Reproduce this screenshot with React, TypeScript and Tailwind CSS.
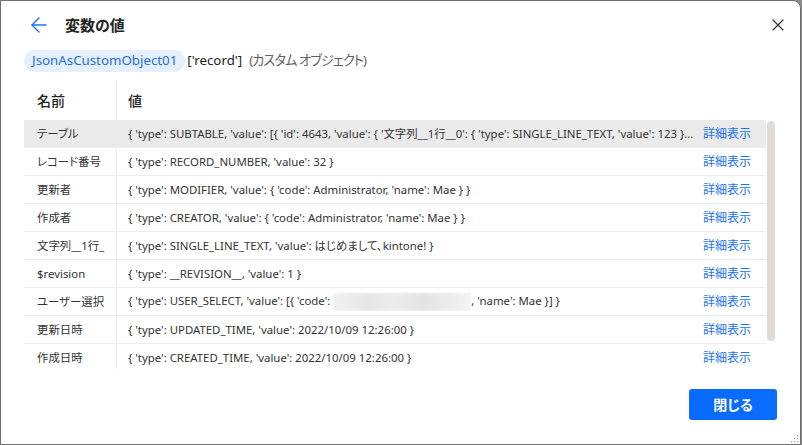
import { ArrowLeft, X } from "lucide-react";

const rows: { name: string; value: React.ReactNode }[] = [
  {
    name: "テーブル",
    value:
      "{ 'type': SUBTABLE, 'value': [{ 'id': 4643, 'value': { '文字列__1行__0': { 'type': SINGLE_LINE_TEXT, 'value': 123 }...",
  },
  { name: "レコード番号", value: "{ 'type': RECORD_NUMBER, 'value': 32 }" },
  { name: "更新者", value: "{ 'type': MODIFIER, 'value': { 'code': Administrator, 'name': Mae } }" },
  { name: "作成者", value: "{ 'type': CREATOR, 'value': { 'code': Administrator, 'name': Mae } }" },
  { name: "文字列__1行_", value: "{ 'type': SINGLE_LINE_TEXT, 'value': はじめまして、kintone! }" },
  { name: "$revision", value: "{ 'type': __REVISION__, 'value': 1 }" },
  {
    name: "ユーザー選択",
    value: (
      <>
        {"{ 'type': USER_SELECT, 'value': [{ 'code': "}
        <span className="inline-block align-middle w-[138px] h-[18px] bg-[linear-gradient(90deg,#f2f2f2,#e6e6e6_25%,#ececec_45%,#e3e3e3_65%,#f3f3f3)] blur-[1px]" />
        {", 'name': Mae }] }"}
      </>
    ),
  },
  { name: "更新日時", value: "{ 'type': UPDATED_TIME, 'value': 2022/10/09 12:26:00 }" },
  { name: "作成日時", value: "{ 'type': CREATED_TIME, 'value': 2022/10/09 12:26:00 }" },
];

export default function App() {
  return (
    <div
      className="w-[802px] h-[445px] bg-[#8c8c8c] overflow-hidden [font-feature-settings:'palt']"
      style={{ fontFamily: '"Noto Sans", "Noto Sans CJK JP", sans-serif' }}
    >
      <div className="relative w-[801px] h-[445px] bg-white border border-[#6f6f6f] rounded-tr-lg flex flex-col">
        {/* header */}
        <div className="flex items-center h-[48px] pl-[26px] pr-[12px]">
          <ArrowLeft className="w-[24px] h-[24px] text-[#1a73f0]" strokeWidth={1.4} />
          <h1 className="ml-[14px] text-[15px] font-semibold text-[#242424]">変数の値</h1>
          <X className="ml-auto w-[20px] h-[20px] text-[#333]" strokeWidth={1.4} />
        </div>

        {/* path */}
        <div className="flex items-center pl-[23px] h-[24px] text-[13.3px]">
          <span className="px-[8px] h-[22px] flex items-center rounded-full bg-[#e5effd] text-[#1f6fe6]">
            JsonAsCustomObject01
          </span>
          <span className="ml-[2px] text-[#242424]">['record']</span>
          <span className="ml-[7px] text-[#616161] tracking-[-1px]">(カスタム オブジェクト)</span>
        </div>

        {/* table */}
        <div className="flex ml-[23px] mr-[24px] mt-[8px] h-[288px] overflow-hidden">
          <div className="flex-1 min-w-0 text-[11.4px] text-[#333]">
            <div className="grid grid-cols-[93px_1fr_63px] h-[39px] text-[14px] font-medium text-[#242424]">
              <div className="pl-[13px] flex items-center border-r border-[#ececec]">名前</div>
              <div className="pl-[11px] flex items-center">値</div>
              <div />
            </div>
            {rows.map((r, i) => (
              <div
                key={i}
                className={`grid grid-cols-[93px_1fr_63px] h-[28px] border-b border-[#ededed] ${
                  i === 0 ? "bg-[#ebeaea]" : ""
                }`}
              >
                <div className="pl-[13px] flex items-center border-r border-[#ececec] whitespace-nowrap overflow-hidden">
                  {r.name}
                </div>
                <div className="pl-[11px] pr-[6px] flex items-center min-w-0">
                  <span className="truncate">{r.value}</span>
                </div>
                <div className="flex items-center text-[#1a73f0] text-[12px] whitespace-nowrap">詳細表示</div>
              </div>
            ))}
          </div>
          <div className="w-[10px] pl-[1px] pt-[40px]">
            <div className="w-[8px] h-[220px] rounded-full bg-[#dedcdb]" />
          </div>
        </div>

        {/* footer */}
        <div className="flex justify-end mt-auto mb-[24px] mr-[23px]">
          <button className="w-[88px] h-[31px] rounded-[3px] bg-[#0a6cff] text-white text-[14px] font-semibold">
            閉じる
          </button>
        </div>

        <svg className="absolute right-[1px] bottom-[1px]" width="10" height="10" viewBox="0 0 10 10">
          {[
            [8, 2], [8, 5], [5, 5], [8, 8], [5, 8], [2, 8],
          ].map(([x, y], i) => (
            <rect key={i} x={x} y={y} width="1.2" height="1.2" fill="#9a9a9a" />
          ))}
        </svg>
      </div>
    </div>
  );
}
